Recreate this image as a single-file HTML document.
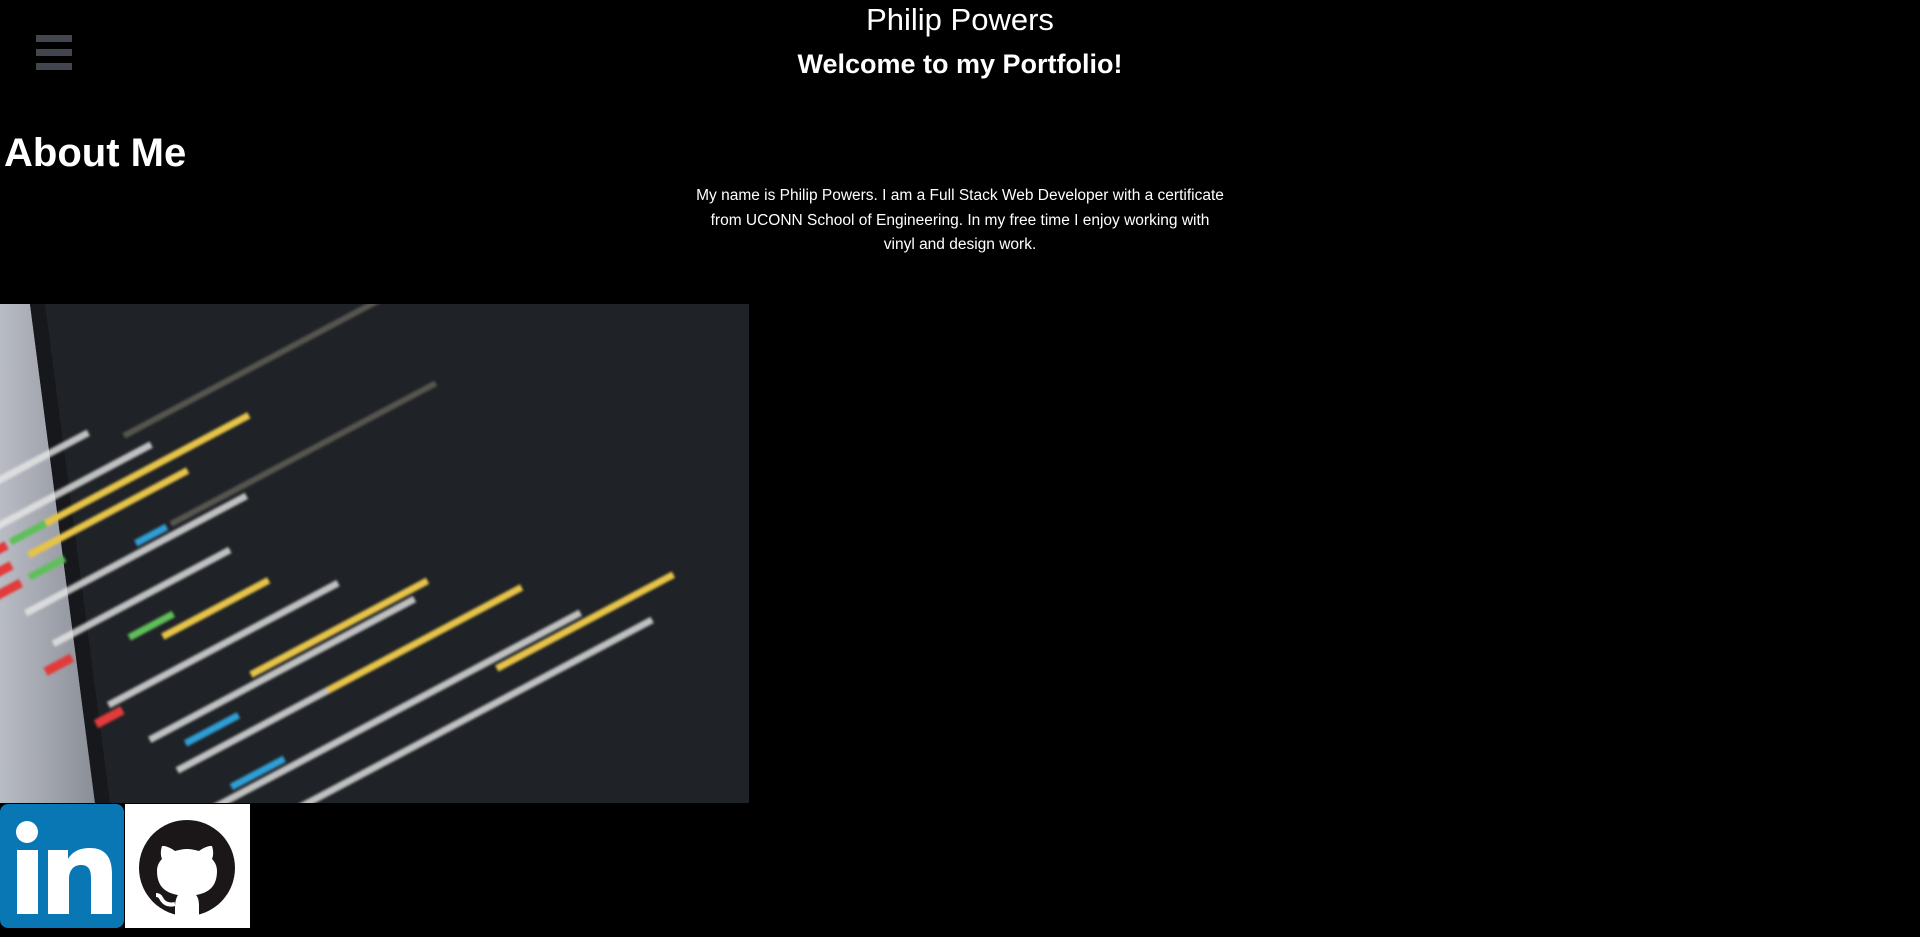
<!DOCTYPE html>
<html><head><meta charset="utf-8"><style>
html,body{margin:0;padding:0;background:#000;width:1920px;height:937px;overflow:hidden;font-family:"Segoe UI","Liberation Sans",sans-serif;color:#fff}
.ham{position:absolute;left:36px;top:35px;width:36px}
.ham div{height:7px;background:#43454f;margin-bottom:7px}
h1.t{position:absolute;top:0;left:0;width:1920px;text-align:center;margin:0;font-size:31px;font-weight:normal;line-height:40px}
h2.w{position:absolute;top:45px;left:0;width:1920px;text-align:center;margin:0;font-size:27px;font-weight:bold;line-height:38px}
h2.a{position:absolute;top:128px;left:4px;margin:0;font-size:40px;font-weight:bold;line-height:50px}
p{position:absolute;top:184px;left:560px;width:800px;text-align:center;margin:0;font-size:15.5px;line-height:24.5px}
.img{position:absolute;left:0;top:304px;width:749px;height:499px;overflow:hidden}
.li{position:absolute;left:0;top:804px;width:124px;height:124px}
.gh{position:absolute;left:125px;top:804px;width:125px;height:124px;background:#fff}
</style></head><body>
<div class="ham"><div></div><div></div><div></div></div>
<h1 class="t">Philip Powers</h1>
<h2 class="w">Welcome to my Portfolio!</h2>
<h2 class="a">About Me</h2>
<p>My name is Philip Powers. I am a Full Stack Web Developer with a certificate<br>from UCONN School of Engineering. In my free time I enjoy working with<br>vinyl and design work.</p>
<div class="img"><svg width="749" height="499" viewBox="0 0 749 499">
<defs><linearGradient id="g" x1="0" x2="1"><stop offset="0" stop-color="#b9bcc4"/><stop offset="1" stop-color="#8a8e96"/></linearGradient>
<filter id="b"><feGaussianBlur stdDeviation="1.2"/></filter></defs>
<rect width="749" height="499" fill="#1f2226"/>
<polygon points="0,0 30,0 95,499 0,499" fill="url(#g)"/>
<polygon points="30,0 45,0 110,499 95,499" fill="#16181b"/>
<g filter="url(#b)" transform="rotate(-28 300 250)">
<g fill="#e8e8e8" opacity=".8">
<rect x="20" y="40" width="150" height="7"/><rect x="30" y="80" width="190" height="7"/><rect x="30" y="170" width="250" height="7"/><rect x="40" y="210" width="200" height="7"/><rect x="60" y="290" width="260" height="7"/><rect x="80" y="340" width="300" height="7"/><rect x="90" y="380" width="380" height="7"/><rect x="100" y="430" width="420" height="7"/><rect x="120" y="470" width="460" height="7"/>
</g>
<g fill="#e23b3b"><rect x="10" y="100" width="35" height="9"/><rect x="10" y="120" width="30" height="9"/><rect x="10" y="140" width="30" height="9"/><rect x="20" y="230" width="30" height="9"/><rect x="40" y="300" width="30" height="9"/></g>
<g fill="#e6c34a"><rect x="60" y="100" width="260" height="7"/><rect x="60" y="120" width="180" height="7"/><rect x="140" y="255" width="120" height="7"/><rect x="200" y="330" width="200" height="7"/><rect x="260" y="380" width="220" height="7"/><rect x="420" y="440" width="200" height="7"/></g>
<g fill="#5fbf5a"><rect x="50" y="100" width="40" height="7"/><rect x="50" y="140" width="40" height="7"/><rect x="110" y="240" width="50" height="7"/></g>
<g fill="#2e9fd6"><rect x="160" y="160" width="35" height="7"/><rect x="110" y="360" width="60" height="7"/><rect x="130" y="420" width="60" height="7"/></g>
<g fill="#6d6a5f" opacity=".7"><rect x="200" y="160" width="300" height="6"/><rect x="200" y="60" width="350" height="6"/></g>
</g>
</svg></div>
<svg class="li" viewBox="0 0 124 124"><rect width="124" height="124" rx="8" fill="#0a77b5"/>
<circle cx="27" cy="28" r="11" fill="#fff"/><rect x="17" y="46" width="21" height="64" fill="#fff"/>
<path d="M48 46h20v9c5-8 12-11 22-11 15 0 22 9 22 26v40H91V74c0-9-3-13-10-13s-12 5-12 14v35H48z" fill="#fff"/></svg>
<div class="gh"><svg width="125" height="124" viewBox="0 0 125 124">
<circle cx="62" cy="64" r="48" fill="#1b1718"/>
<path d="M50 104c0-6 1-10 3-13-12-2-21-8-21-24 0-5 2-9 5-12-1-2-2-7 0-13 0 0 5-1 13 5 4-1 8-2 12-2s8 1 12 2c8-6 13-5 13-5 2 6 1 11 0 13 3 3 5 7 5 12 0 16-9 22-21 24 2 2 3 6 3 11v12H50z" fill="#fff"/>
<path d="M50 100c-8 2-12-2-14-6-1-2-3-3-5-3" stroke="#fff" stroke-width="4" fill="none"/></svg></div>
</body></html>
